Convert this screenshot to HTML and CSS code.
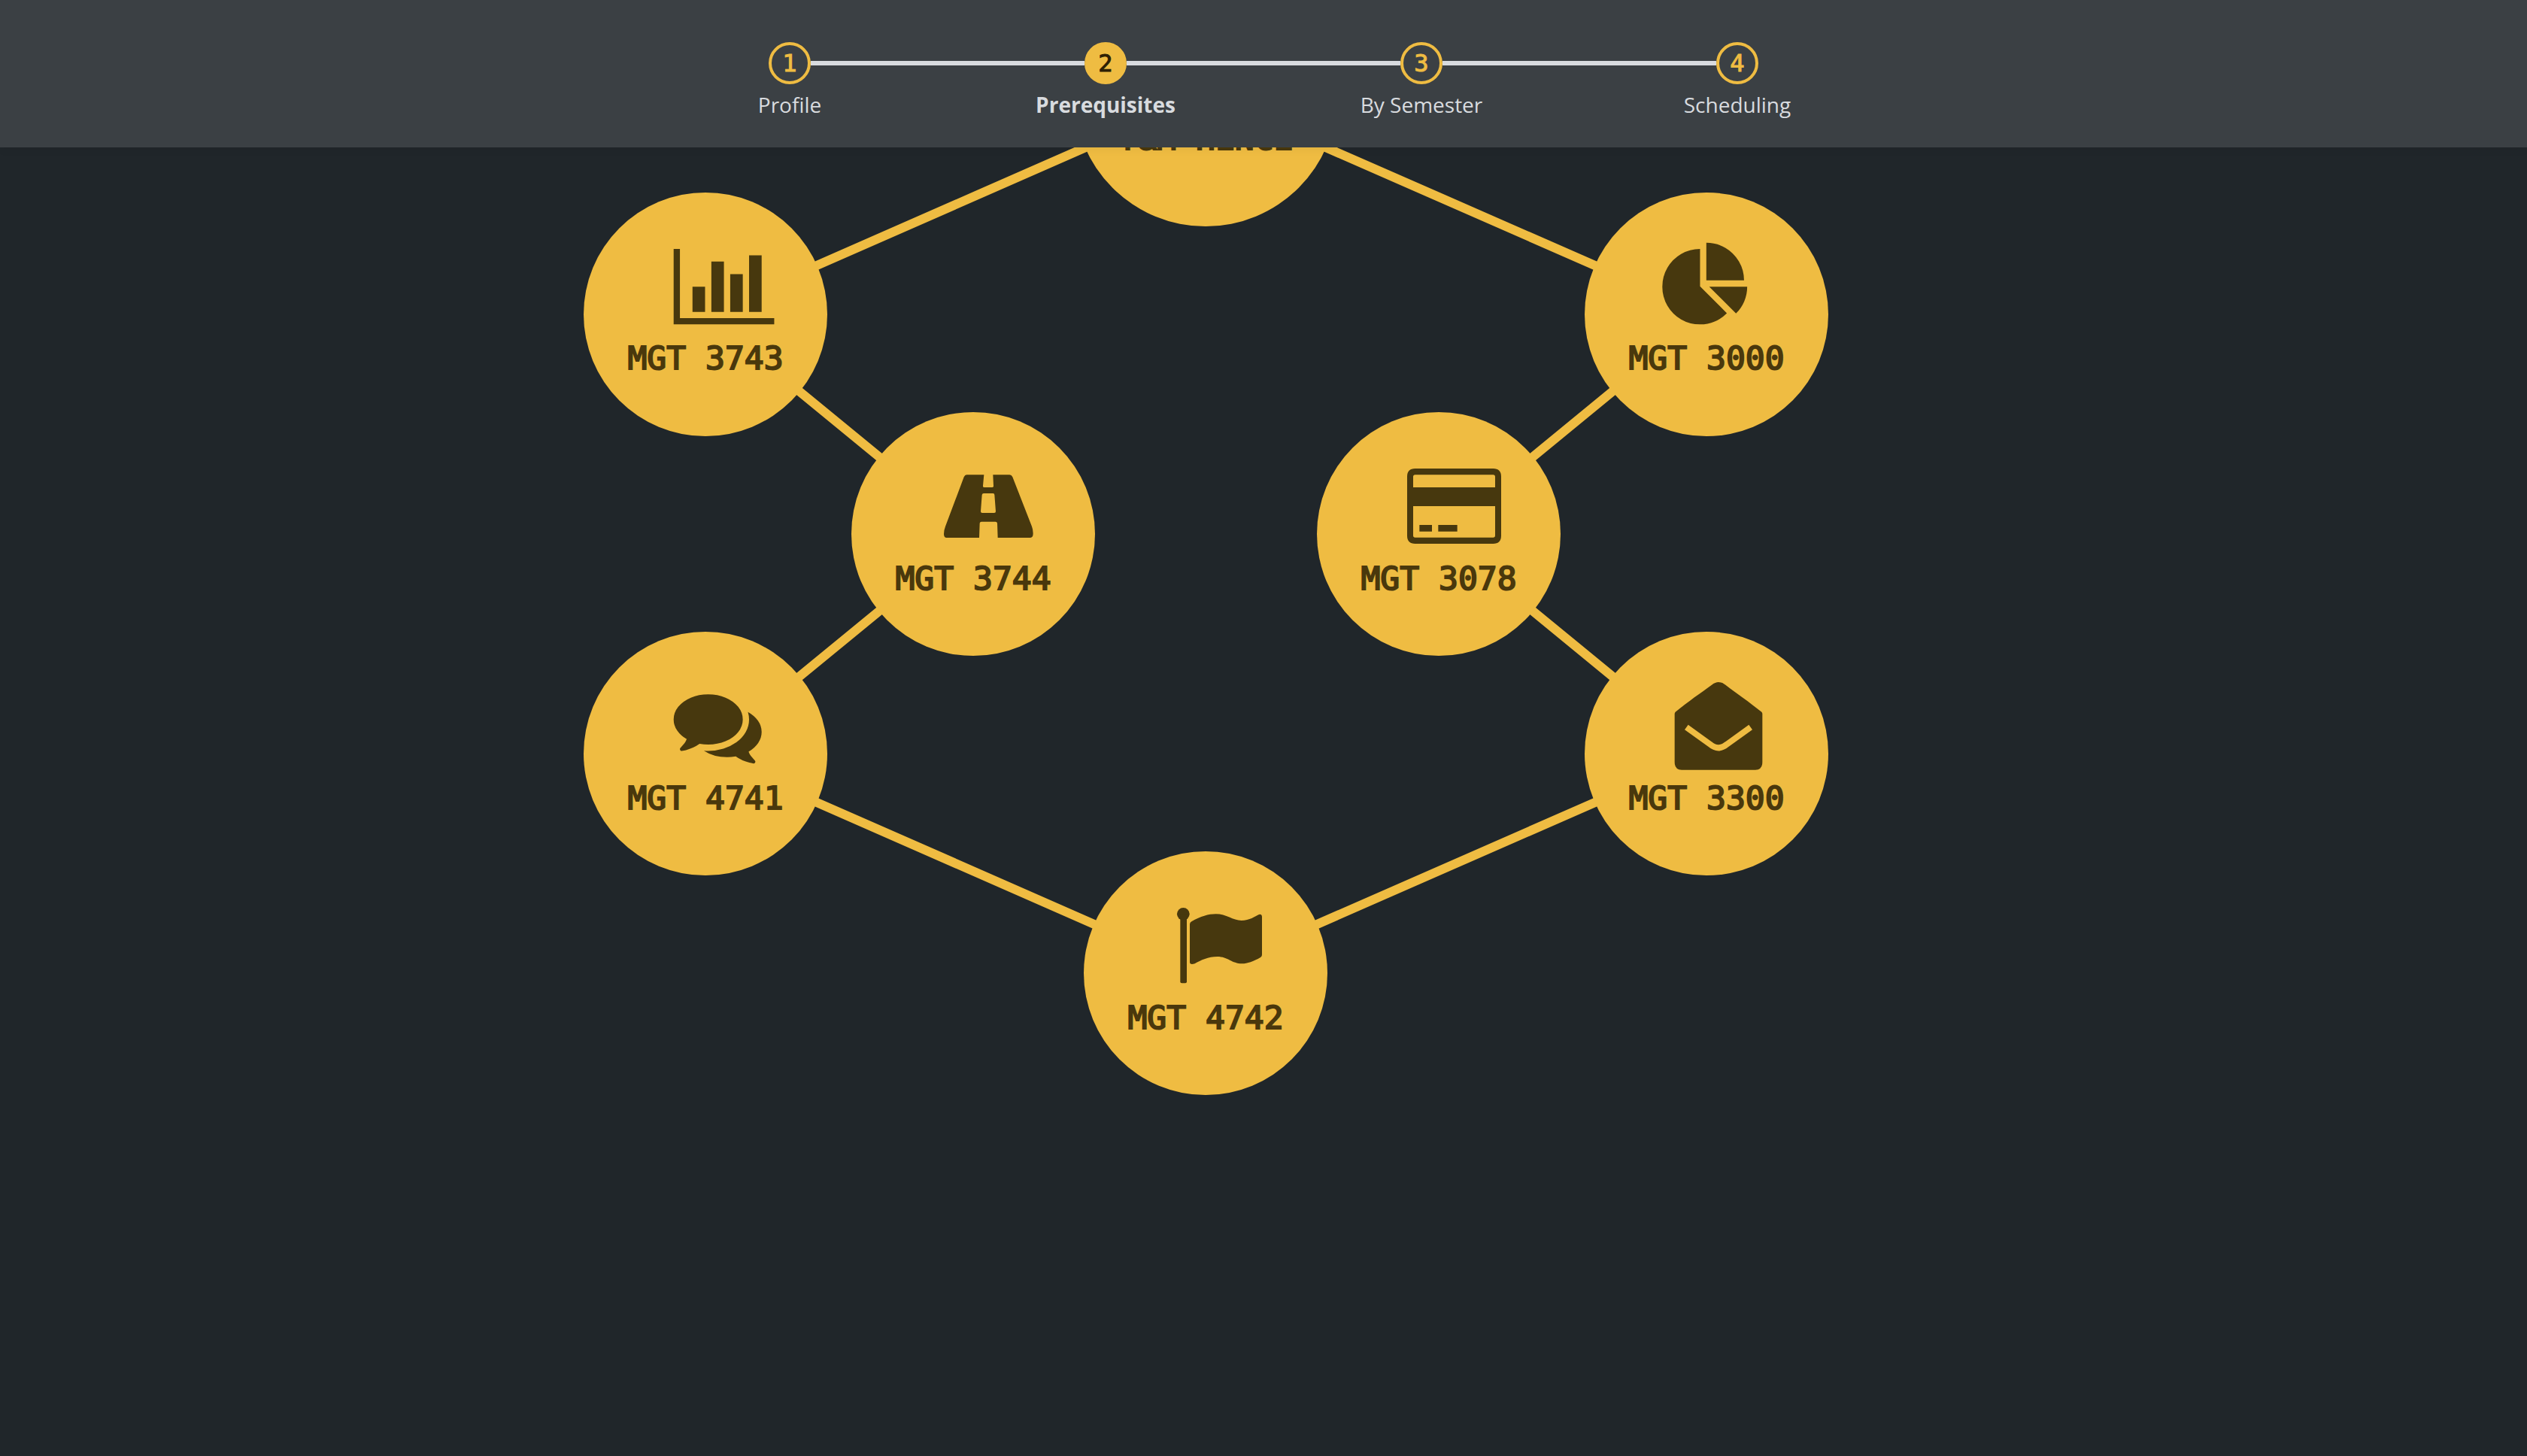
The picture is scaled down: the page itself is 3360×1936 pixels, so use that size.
FILE: index.html
```html
<!DOCTYPE html>
<html lang="en">
<head>
<meta charset="utf-8">
<title>Prerequisites</title>
<link rel="stylesheet" href="styles.css">
</head>
<body>
<header class="header">
  <ol class="steps">
    <li class="step"><a class="step-link" href="#profile"><span class="track"><span class="dot">1</span></span><span class="label">Profile</span></a></li>
    <li class="step current"><a class="step-link" href="#prerequisites" aria-current="step"><span class="track"><span class="dot">2</span></span><span class="label">Prerequisites</span></a></li>
    <li class="step"><a class="step-link" href="#semester"><span class="track"><span class="dot">3</span></span><span class="label">By Semester</span></a></li>
    <li class="step"><a class="step-link" href="#scheduling"><span class="track"><span class="dot">4</span></span><span class="label">Scheduling</span></a></li>
  </ol>
</header>
<main class="main">
  <svg class="graph" viewBox="0 196 3360 1740" role="group" aria-label="Course prerequisites">
    <path class="edges" d="M1603 126L938 418L1294 710L938 1002L1603 1294L2269 1002L1913 710L2269 418Z"/>
    <g class="node">
      <circle cx="1603" cy="126" r="175"/>
      <text x="1603" y="199">T&amp;M HENCE</text>
    </g>
    <g class="node">
      <circle cx="938" cy="418" r="162"/>
      <g class="icon" transform="translate(895.7 322.7) scale(.0653)"><path d="M640 896v512h-256v-512h256zm384-512v1024h-256v-1024h256zm1024 1152v128h-2048v-1536h128v1408h1920zm-640-896v768h-256v-768h256zm384-384v1152h-256v-1152h256z"/></g>
      <text x="938" y="491">MGT 3743</text>
    </g>
    <g class="node">
      <circle cx="2269" cy="418" r="162"/>
      <g class="icon" transform="translate(2210.3 322.7) scale(.0653)"><path d="M768 890l546 546q-106 108-247.500 168t-298.500 60q-209 0-385.500-103t-279.500-279.500-103-385.500 103-385.500 279.500-279.500 385.500-103v762zm187 6h773q0 157-60 298.500t-168 247.500zm709-128h-768v-768q209 0 385.500 103t279.500 279.500 103 385.500z"/></g>
      <text x="2269" y="491">MGT 3000</text>
    </g>
    <g class="node">
      <circle cx="1294" cy="710" r="162"/>
      <g class="icon" transform="translate(1100 520) scale(.33333)"><path fill-rule="evenodd" d="M556 334H625L621 378q-1 6 6 6H658q6 0 5-6L661 334H727q8 0 12 9L816 540Q821 553 821 568Q821 585 810 585H680L678 527q-1-6-7-6H615q-6 0-7 6L606 585H476Q465 585 465 570Q465 555 471 540L545 343q4-9 11-9zM624 408H661q6 0 6 6L672 480q0 6-6 6H618q-6 0-6-6L617 414q1-6 7-6z"/></g>
      <text x="1294" y="784">MGT 3744</text>
    </g>
    <g class="node">
      <circle cx="1913" cy="710" r="162"/>
      <g class="icon" transform="translate(1720 520) scale(.33333)"><path fill-rule="evenodd" d="M485 309H796q32 0 32 32V577q0 32-32 32H485q-32 0-32-32V341q0-32 32-32zM485 334q-8 0-8 8V384H804V342q0-8-8-8zM477 459V576q0 8 8 8H796q8 0 8-8V459zM502 534H552V560H502zM577 534H653V560H577z"/></g>
      <text x="1913" y="784">MGT 3078</text>
    </g>
    <g class="node">
      <circle cx="938" cy="1002" r="162"/>
      <g class="icon" transform="translate(895.7 906.5) scale(.0653)"><path d="M1408 768q0 139-94 257t-256.500 186.500-353.500 68.500q-86 0-176-16-124 88-278 128-36 9-86 16h-3q-11 0-20.500-8t-11.500-21q-1-3-1-6.500t.5-6.500 2-6l2.500-5 3.500-5.500 4-5 4.500-5 4-4.500q5-6 23-25t26-29.500 22.500-29 25-38.500 20.500-44q-124-72-195-177t-71-224q0-139 94-257t256.500-186.500 353.500-68.500 353.500 68.500 256.500 186.500 94 257zm384 256q0 120-71 224.500t-195 176.500q10 24 20.500 44t25 38.500 22.500 29 26 29.500 23 25q1 1 4 4.500t4.500 5 4 5 3.500 5.500l2.500 5 2 6 .5 6.500-1 6.500q-3 14-13 22t-22 7q-50-7-86-16-154-40-278-128-90 16-176 16-271 0-472-132 58 4 88 4 161 0 309-45t264-129q125-92 192-212t67-254q0-77-23-152 129 71 204 178t75 230z"/></g>
      <text x="938" y="1076">MGT 4741</text>
    </g>
    <g class="node">
      <circle cx="2269" cy="1002" r="162"/>
      <g class="icon" transform="translate(2080 820) scale(.33333)"><path d="M443 380C500 333 540 308 588 272Q602 261 615 261Q629 261 643 272C690 308 735 338 787 380Q790 383 790 388V580Q790 611 762 611H468Q440 611 440 580V388Q440 383 443 380z"/><path class="fold" d="M487 441L580 508Q615 538 650 508L743 441"/></g>
      <text x="2269" y="1076">MGT 3300</text>
    </g>
    <g class="node">
      <circle cx="1603" cy="1294" r="162"/>
      <g class="icon" transform="translate(1400 1110) scale(.33333)"><circle cx="520" cy="316" r="25"/><rect x="508" y="316" width="26" height="276" rx="6"/><path d="M546 357Q546 350 553 346C590 325 620 316 650 316C692 316 718 342 752 342C785 342 806 325 822 318Q834 315 834 328V478Q834 485 828 489C800 505 775 514 755 514C712 514 700 486 655 486C620 486 590 500 566 514Q546 520 546 508z"/></g>
      <text x="1603" y="1368">MGT 4742</text>
    </g>
  </svg>
</main>
</body>
</html>
```
FILE: styles.css
```css
:root {
  --gold: #efbc42;
  --bg: #20262a;
  --bar: #3b4044;
  --light: #d8dbdf;
}

body {
  margin: 0;
  min-height: 100vh;
  background: var(--bg);
  font-family: "Open Sans", sans-serif;
}

.header {
  position: sticky;
  top: 0;
  z-index: 1;
  padding: 56px 0 38px;
  background: var(--bar);
  box-shadow: 0 2px 12px rgba(0, 0, 0, 0.06);
}

.steps {
  display: flex;
  width: 50%;
  margin: 0 auto;
  padding: 0;
  list-style: none;
}

.step {
  flex: 1;
}

.step-link {
  display: flex;
  flex-direction: column;
  gap: 8px;
  color: var(--light);
  text-decoration: none;
}

.track {
  display: flex;
  align-items: center;
}

.track::before,
.track::after {
  content: "";
  flex: 1;
  height: 6px;
  background: var(--light);
}

.step:first-child .track::before,
.step:last-child .track::after {
  background: none;
}

.dot {
  box-sizing: border-box;
  width: 56px;
  height: 56px;
  border: 4px solid var(--gold);
  border-radius: 50%;
  color: var(--gold);
  font: 32px/48px "DejaVu Sans Mono", monospace;
  -webkit-text-stroke: 1px currentColor;
  text-align: center;
}

.current .dot {
  background: var(--gold);
  color: #2e2004;
}

.label {
  font-size: 28px;
  line-height: 38px;
  text-align: center;
}

.current .label {
  font-weight: bold;
}

.graph {
  display: block;
  width: 100%;
}

.edges {
  fill: none;
  stroke: var(--gold);
  stroke-width: 12px;
}

.node {
  fill: var(--gold);
  font: 43px "DejaVu Sans Mono", monospace;
  text-anchor: middle;
}

.node text {
  fill: #4a380c;
  stroke: #4a380c;
  stroke-width: 2px;
}

.icon {
  fill: #47380e;
}

.fold {
  fill: none;
  stroke: var(--gold);
  stroke-width: 24px;
}
```
